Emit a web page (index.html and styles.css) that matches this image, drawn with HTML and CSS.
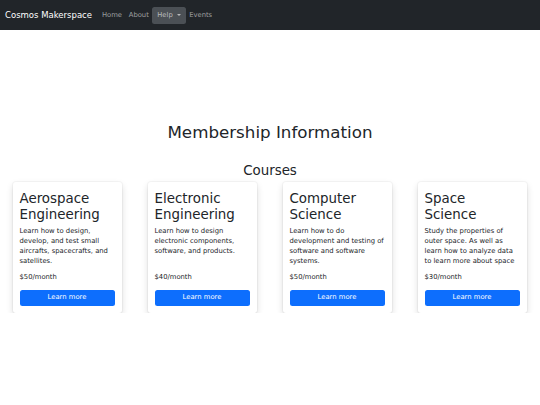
FILE: index.html
```html
<!DOCTYPE html>
<html lang="en">
<head>
<meta charset="utf-8">
<title>Cosmos Makerspace</title>
<link rel="stylesheet" href="styles.css">
</head>
<body>
<nav class="navbar">
  <a class="brand" href="#">Cosmos Makerspace</a>
  <ul class="nav">
    <li><a class="nav-link" href="#">Home</a></li>
    <li><a class="nav-link" href="#">About</a></li>
    <li><a class="nav-link active" href="#">Help<span class="caret"></span></a></li>
    <li><a class="nav-link" href="#">Events</a></li>
  </ul>
</nav>
<main class="main">
  <h1 class="title">Membership Information</h1>
  <h2 class="subtitle">Courses</h2>
  <div class="cards">
    <div class="col">
      <div class="card">
        <h2 class="card-title">Aerospace Engineering</h2>
        <p class="card-text">Learn how to design, develop, and test small aircrafts, spacecrafts, and satellites.</p>
        <p class="price">$50/month</p>
        <a class="btn" href="#">Learn more</a>
      </div>
    </div>
    <div class="col">
      <div class="card">
        <h2 class="card-title">Electronic Engineering</h2>
        <p class="card-text">Learn how to design electronic components, software, and products.</p>
        <p class="price">$40/month</p>
        <a class="btn" href="#">Learn more</a>
      </div>
    </div>
    <div class="col">
      <div class="card">
        <h2 class="card-title">Computer Science</h2>
        <p class="card-text">Learn how to do development and testing of software and software systems.</p>
        <p class="price">$50/month</p>
        <a class="btn" href="#">Learn more</a>
      </div>
    </div>
    <div class="col">
      <div class="card">
        <h2 class="card-title">Space Science</h2>
        <p class="card-text">Study the properties of outer space. As well as learn how to analyze data to learn more about space</p>
        <p class="price">$30/month</p>
        <a class="btn" href="#">Learn more</a>
      </div>
    </div>
  </div>
</main>
</body>
</html>
```
FILE: styles.css
```css
* { box-sizing: border-box; }
html, body { margin: 0; padding: 0; }
body {
  font-family: "DejaVu Sans", sans-serif;
  font-size: 6.8px;
  line-height: 1.5;
  color: #212529;
  background: #fff;
}
a { text-decoration: none; }

.navbar {
  height: 30px;
  background: #212529;
  display: flex;
  align-items: center;
  padding: 0 5px;
}
.brand {
  color: #fff;
  font-size: 8.5px;
  line-height: 1;
  margin-right: 6.5px;
}
.nav {
  list-style: none;
  margin: 0;
  padding: 0;
  display: flex;
  align-items: center;
}
.nav-link {
  display: flex;
  align-items: center;
  height: 17px;
  padding: 0 3.4px;
  color: rgba(255,255,255,.55);
  font-size: 6.8px;
  border-radius: 2.5px;
}
.nav-link.active {
  background: #4b5055;
  padding: 0 5px;
  color: rgba(255,255,255,.6);
}
.caret {
  display: inline-block;
  margin-left: 4px;
  border-top: 2px solid currentColor;
  border-left: 2px solid transparent;
  border-right: 2px solid transparent;
  width: 0;
  height: 0;
}

.main { padding-top: 92px; }
.title {
  margin: 0;
  text-align: center;
  font-weight: 400;
  font-size: 16.7px;
  line-height: 20px;
}
.subtitle {
  margin: 21px 0 0;
  text-align: center;
  font-weight: 400;
  font-size: 13.4px;
  line-height: 16px;
}
.cards {
  margin-top: 3px;
  display: grid;
  grid-template-columns: repeat(4, 1fr);
}
.col { padding: 0 13.5px 0 12.5px; display: flex; }
.card {
  flex: 1;
  display: flex;
  flex-direction: column;
  background: #fff;
  border-radius: 3px;
  box-shadow: 0 3px 7px rgba(0,0,0,.14), 0 0 0 1px rgba(0,0,0,.03);
  padding: 8.5px 7px 7.5px;
}
.card-title {
  margin: 0 0 3px;
  font-weight: 400;
  font-size: 13.4px;
  line-height: 16px;
}
.card-text {
  margin: 0 0 5.7px;
  line-height: 10.2px;
  flex: 1;
}
.price {
  margin: 0 0 8px;
  line-height: 10px;
}
.btn {
  display: block;
  background: #0d6efd;
  color: #fff;
  text-align: center;
  height: 15.5px;
  line-height: 15.5px;
  border-radius: 2.5px;
}
```
